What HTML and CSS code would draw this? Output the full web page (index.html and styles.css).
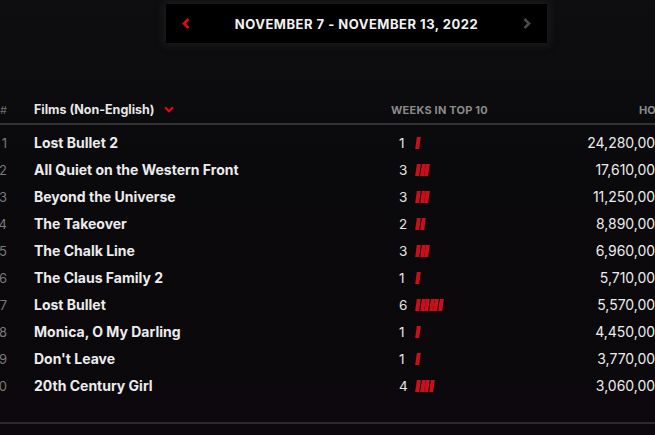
FILE: index.html
```html
<!DOCTYPE html>
<html>
<head>
<meta charset="utf-8">
<link rel="stylesheet" href="styles.css">
</head>
<body>
<div class="page">
  <div class="week-nav">
    <svg class="chev chev-left" width="8" height="11" viewBox="0 0 8 11"><path d="M6.5 1 L2 5.5 L6.5 10" fill="none" stroke="#e50914" stroke-width="2.6"/></svg>
    <span class="week-label">NOVEMBER 7 - NOVEMBER 13, 2022</span>
    <svg class="chev chev-right" width="8" height="11" viewBox="0 0 8 11"><path d="M1.5 1 L6 5.5 L1.5 10" fill="none" stroke="#4a4a4a" stroke-width="2.6"/></svg>
  </div>

  <div class="table">
    <div class="thead">
      <span class="rank">#</span>
      <span class="cat">Films (Non-English)
        <svg class="dd" width="10" height="7" viewBox="0 0 10 7"><path d="M1 1.2 L5 5.2 L9 1.2" fill="none" stroke="#e50914" stroke-width="2.2"/></svg>
      </span>
      <span class="weeks-h">WEEKS IN TOP 10</span>
      <span class="hours-h">HOURS VIEWED</span>
    </div>
    <div class="tbody">
      <div class="row"><span class="rank">1</span><span class="title">Lost Bullet 2</span><span class="weeks"><span class="wn">1</span><span class="bars"><i></i></span></span><span class="hours">24,280,000</span></div>
      <div class="row"><span class="rank">2</span><span class="title">All Quiet on the Western Front</span><span class="weeks"><span class="wn">3</span><span class="bars"><i></i><i></i><i></i></span></span><span class="hours">17,610,000</span></div>
      <div class="row"><span class="rank">3</span><span class="title">Beyond the Universe</span><span class="weeks"><span class="wn">3</span><span class="bars"><i></i><i></i><i></i></span></span><span class="hours">11,250,000</span></div>
      <div class="row"><span class="rank">4</span><span class="title">The Takeover</span><span class="weeks"><span class="wn">2</span><span class="bars"><i></i><i></i></span></span><span class="hours">8,890,000</span></div>
      <div class="row"><span class="rank">5</span><span class="title">The Chalk Line</span><span class="weeks"><span class="wn">3</span><span class="bars"><i></i><i></i><i></i></span></span><span class="hours">6,960,000</span></div>
      <div class="row"><span class="rank">6</span><span class="title">The Claus Family 2</span><span class="weeks"><span class="wn">1</span><span class="bars"><i></i></span></span><span class="hours">5,710,000</span></div>
      <div class="row"><span class="rank">7</span><span class="title">Lost Bullet</span><span class="weeks"><span class="wn">6</span><span class="bars"><i></i><i></i><i></i><i></i><i></i><i></i></span></span><span class="hours">5,570,000</span></div>
      <div class="row"><span class="rank">8</span><span class="title">Monica, O My Darling</span><span class="weeks"><span class="wn">1</span><span class="bars"><i></i></span></span><span class="hours">4,450,000</span></div>
      <div class="row"><span class="rank">9</span><span class="title">Don't Leave</span><span class="weeks"><span class="wn">1</span><span class="bars"><i></i></span></span><span class="hours">3,770,000</span></div>
      <div class="row"><span class="rank">10</span><span class="title">20th Century Girl</span><span class="weeks"><span class="wn">4</span><span class="bars"><i></i><i></i><i></i><i></i></span></span><span class="hours">3,060,000</span></div>
    </div>
  </div>
</div>
</body>
</html>
```

FILE: styles.css
```css
html, body {
  margin: 0;
  padding: 0;
  width: 655px;
  height: 435px;
  overflow: hidden;
  background: #0b090d;
}
body {
  background: linear-gradient(180deg, #0e0d10 0%, #0a090b 40%, #0c080d 100%);
  font-family: Inter, "Liberation Sans", sans-serif;
  color: #e6e6e6;
}
.page {
  padding-top: 4px;
}
.week-nav {
  margin-left: 166px;
  width: 381px;
  height: 39px;
  background: #000;
  box-shadow: 0 0 8px 2px rgba(60, 60, 60, 0.35);
  display: flex;
  align-items: center;
  justify-content: space-between;
  padding: 0 16px;
  box-sizing: border-box;
}
.chev { display: block; }
.week-label {
  font-weight: 700;
  font-size: 13px;
  letter-spacing: 0.5px;
  color: #f2f2f2;
  margin-top: 1px;
}
.table {
  margin-top: 53px;
  margin-left: -35px;
  width: 699px;
}
.thead, .row {
  display: grid;
  grid-template-columns: 42px 27px 357px 170px 103px;
  align-items: center;
  white-space: nowrap;
}
.thead {
  height: 27px;
  border-bottom: 2px solid #333;
}
.thead .rank {
  font-size: 11px;
  color: #6e6e6e;
}
.cat {
  grid-column: 3;
  font-size: 12.5px;
  font-weight: 700;
  color: #e8e8e8;
  display: flex;
  align-items: center;
}
.dd { margin-left: 9px; margin-top: -1px; }
.weeks-h {
  grid-column: 4;
  font-size: 11px;
  font-weight: 700;
  color: #8a8a8a;
  letter-spacing: 0.2px;
}
.hours-h {
  grid-column: 5;
  font-size: 11px;
  font-weight: 700;
  color: #8a8a8a;
  padding-left: 78px;
}
.tbody {
  padding-top: 4px;
  padding-bottom: 23px;
  border-bottom: 2px solid #2a2a2a;
}
.row {
  height: 27px;
}
.rank {
  grid-column: 1;
  font-size: 13px;
  color: #7a7a7a;
  text-align: right;
}
.title {
  grid-column: 3;
  font-size: 14px;
  font-weight: 700;
  color: #ececec;
}
.weeks {
  grid-column: 4;
  display: flex;
  align-items: center;
  padding-left: 8px;
}
.wn {
  font-size: 13.5px;
  color: #e6e6e6;
  width: 17px;
}
.bars {
  display: flex;
  gap: 1px;
}
.bars i {
  display: block;
  width: 3.6px;
  height: 12px;
  background: #c8101c;
  transform: skewX(-8deg);
}
.hours {
  grid-column: 5;
  font-size: 14px;
  color: #ececec;
  text-align: right;
}
```
